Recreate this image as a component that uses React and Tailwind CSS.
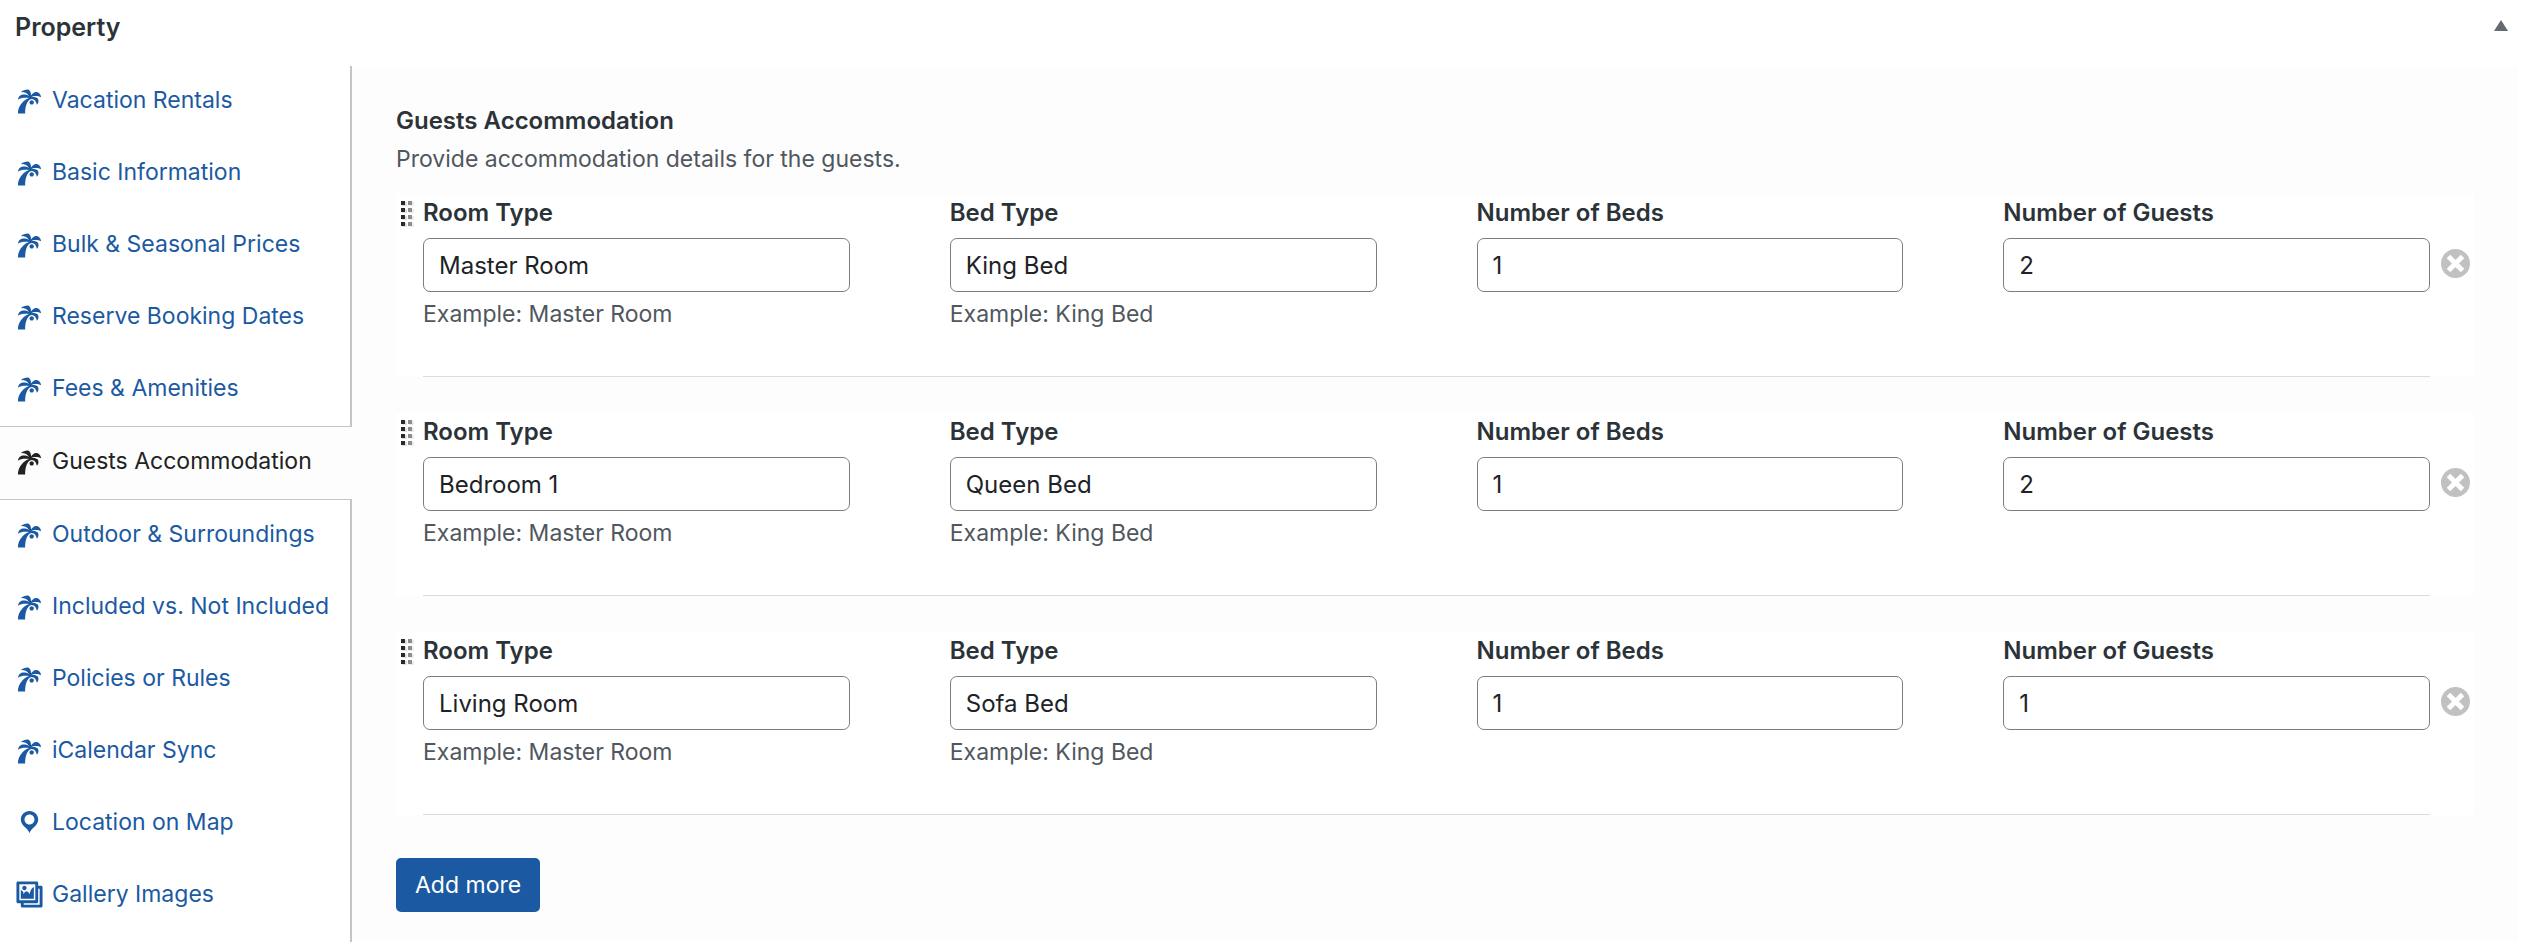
import { useState } from "react";

const NAV = [
  { label: "Vacation Rentals", icon: "palm" },
  { label: "Basic Information", icon: "palm" },
  { label: "Bulk & Seasonal Prices", icon: "palm" },
  { label: "Reserve Booking Dates", icon: "palm" },
  { label: "Fees & Amenities", icon: "palm" },
  { label: "Guests Accommodation", icon: "palm", active: true },
  { label: "Outdoor & Surroundings", icon: "palm" },
  { label: "Included vs. Not Included", icon: "palm" },
  { label: "Policies or Rules", icon: "palm" },
  { label: "iCalendar Sync", icon: "palm" },
  { label: "Location on Map", icon: "pin" },
  { label: "Gallery Images", icon: "gallery" },
];

const FIELDS = [
  { key: "room", label: "Room Type", hint: "Example: Master Room" },
  { key: "bed", label: "Bed Type", hint: "Example: King Bed" },
  { key: "beds", label: "Number of Beds" },
  { key: "guests", label: "Number of Guests" },
];

const INITIAL_ROWS = [
  { id: 1, room: "Master Room", bed: "King Bed", beds: "1", guests: "2" },
  { id: 2, room: "Bedroom 1", bed: "Queen Bed", beds: "1", guests: "2" },
  { id: 3, room: "Living Room", bed: "Sofa Bed", beds: "1", guests: "1" },
];

const ICON_PATHS = {
  palm: "M8.58 2.39c.32 0 .59.05.81.14 1.25.55 1.69 2.24 1.7 3.97.59-.82 2.15-2.29 3.41-2.29s2.94.73 3.53 3.55c-1.13-.65-2.42-.94-3.65-.94-1.26 0-2.45.32-3.29.89.4-.11.86-.16 1.33-.16 1.39 0 2.9.45 3.4 1.31.68 1.16.47 3.38-.76 4.14-.14-2.1-1.69-4.12-3.47-4.12-.44 0-.88.12-1.33.38C8 10.62 7 14.56 7 19H2c0-5.53 4.21-9.65 7.68-10.79-.56-.09-1.17-.15-1.82-.15C5.9 7.96 3.6 8.1 2 9.4c.2-1.6 1.2-2.8 2.6-3.3.8-.3 1.7-.4 2.5-.2.9.2 1.8.5 2.5 1C8.9 5.2 7 4.1 4.1 4.1c1.1-1.1 3-1.71 4.48-1.71zM11.5 9.8c.85 0 1.5.65 1.5 1.5s-.65 1.5-1.5 1.5-1.5-.65-1.5-1.5.65-1.5 1.5-1.5z",
  pin: "M10 2C6.69 2 4 4.69 4 8c0 2.02 1.17 3.71 2.53 4.89.43.37 1.18.96 1.85 1.83.74.97 1.41 2.01 1.62 2.71.21-.7.88-1.74 1.62-2.71.67-.87 1.42-1.46 1.85-1.83C14.83 11.71 16 10.02 16 8c0-3.31-2.69-6-6-6zm0 2.56c1.9 0 3.44 1.54 3.44 3.44S11.9 11.44 10 11.44 6.56 9.9 6.56 8 8.1 4.56 10 4.56z",
  gallery:
    "M16 4h1.96c.57 0 1.04.47 1.04 1.04v12.92c0 .57-.47 1.04-1.04 1.04H5.04C4.47 19 4 18.53 4 17.96V16H2.04C1.47 16 1 15.53 1 14.96V2.04C1 1.47 1.47 1 2.04 1h12.92c.57 0 1.04.47 1.04 1.04V4zM3 14h11V3H3v11zm5-8.5C8 4.67 7.33 4 6.5 4S5 4.67 5 5.5 5.67 7 6.5 7 8 6.33 8 5.5zm2 4.5s1-5 3-5v8H4V7c2 0 2 3 2 3s.33-2 2-2 2 2 2 2zm7 7V6h-1v8.96c0 .57-.47 1.04-1.04 1.04H6v1h11z",
};

function NavIcon({ name }) {
  return (
    <svg viewBox="0 0 20 20" className="size-[29px] shrink-0 fill-current" aria-hidden="true">
      <path d={ICON_PATHS[name]} />
    </svg>
  );
}

function Sidebar() {
  return (
    <nav className="w-[352px] shrink-0 text-[23px] leading-9" aria-label="Property sections">
      <ul className="flex h-full flex-col">
        {NAV.map(({ label, icon, active }) => (
          <li
            key={label}
            className={
              active
                ? "border-y border-[#c3c4c7] bg-[#fdfdfd]"
                : "border-r-2 border-[#c3c4c7]"
            }
          >
            <a
              href="#"
              aria-current={active ? "page" : undefined}
              className={
                active
                  ? "flex h-18 items-center gap-2 pb-1 pl-[15px] whitespace-nowrap text-[#222222]"
                  : "flex h-18 items-center gap-2 pb-1 pl-[15px] whitespace-nowrap text-[#1b5aa2]"
              }
            >
              <NavIcon name={icon} />
              <span>{label}</span>
            </a>
          </li>
        ))}
        <li className="grow border-r-2 border-[#c3c4c7]" aria-hidden="true" />
      </ul>
    </nav>
  );
}

function DragHandle() {
  return (
    <svg viewBox="0 0 14 28" className="h-7 w-[14px]" aria-hidden="true">
      {[1, 8, 15, 22].map((y) => (
        <g key={y}>
          <rect x="1" y={y + 1} width="5" height="4" fill="#e2e2e2" />
          <rect x="8" y={y + 1} width="5" height="4" fill="#ececec" />
          <rect x="0" y={y} width="4" height="4" fill="#2a2a2a" />
          <rect x="7" y={y} width="4" height="4" fill="#8c8c8c" />
        </g>
      ))}
    </svg>
  );
}

function RemoveIcon() {
  return (
    <svg viewBox="0 0 29 29" className="size-[29px]" aria-hidden="true">
      <circle cx="14.5" cy="14.5" r="14.5" fill="#c1c1c1" />
      <path d="M7.5 7.5l14 14M21.5 7.5l-14 14" stroke="#ffffff" strokeWidth="5" />
    </svg>
  );
}

function AccommodationRow({ row, onChange, onRemove }) {
  return (
    <div className="flex bg-white">
      <button type="button" aria-label="Reorder" className="flex w-[27px] shrink-0 cursor-move items-start pt-[6px] pl-[5px]">
        <DragHandle />
      </button>
      <div className="grid grow grid-cols-4 gap-x-[100px] border-b border-[#dcdcde] pb-11">
        {FIELDS.map(({ key, label, hint }) => {
          const id = `${key}-${row.id}`;
          return (
            <div key={key} className="flex min-w-0 flex-col">
              <label htmlFor={id} className="mb-[6px] text-[24px] leading-[38px] font-semibold text-[#2c3338]">
                {label}
              </label>
              <input
                id={id}
                type="text"
                value={row[key]}
                onChange={(e) => onChange(row.id, key, e.target.value)}
                className="h-[54px] w-full rounded-[7px] border border-[#7b7d82] bg-white px-[15px] text-[24px] text-[#1d2327]"
              />
              {hint && <p className="mt-1 text-[23px] leading-9 text-[#50575e]">{hint}</p>}
            </div>
          );
        })}
      </div>
      <div className="flex w-11 shrink-0 justify-center pt-[55px] pl-[7px]">
        <button type="button" aria-label="Remove" onClick={() => onRemove(row.id)} className="size-[29px]">
          <RemoveIcon />
        </button>
      </div>
    </div>
  );
}

export default function App() {
  const [rows, setRows] = useState(INITIAL_ROWS);

  const change = (id, key, value) =>
    setRows((list) => list.map((r) => (r.id === id ? { ...r, [key]: value } : r)));
  const remove = (id) => setRows((list) => list.filter((r) => r.id !== id));
  const add = () =>
    setRows((list) => [...list, { id: Date.now(), room: "", bed: "", beds: "", guests: "" }]);

  return (
    <div className="flex min-h-screen flex-col bg-white font-['Inter',sans-serif]">
      <header className="flex h-[66px] items-start justify-between pt-2 pr-6 pl-[15px]">
        <h2 className="text-[25px] leading-[38px] font-semibold text-[#2c3338]">Property</h2>
        <button type="button" aria-label="Toggle panel" className="pt-3">
          <svg viewBox="0 0 14 11" className="h-[11px] w-[14px]" aria-hidden="true">
            <path d="M7 0l7 11H0z" fill="#646970" />
          </svg>
        </button>
      </header>
      <div className="flex grow pr-[14px]">
        <Sidebar />
        <main className="min-w-0 grow bg-[#fdfdfd] px-11 pt-9 pb-[30px]">
          <h3 className="text-[24px] leading-[38px] font-semibold text-[#2c3338]">Guests Accommodation</h3>
          <p className="mb-4 text-[23px] leading-[38px] text-[#50575e]">
            Provide accommodation details for the guests.
          </p>
          <div className="flex flex-col gap-9">
            {rows.map((row) => (
              <AccommodationRow key={row.id} row={row} onChange={change} onRemove={remove} />
            ))}
          </div>
          <button
            type="button"
            onClick={add}
            className="mt-[43px] h-[54px] rounded-[5px] bg-[#1b5aa2] px-[19px] text-[23px] text-white"
          >
            Add more
          </button>
        </main>
      </div>
    </div>
  );
}
